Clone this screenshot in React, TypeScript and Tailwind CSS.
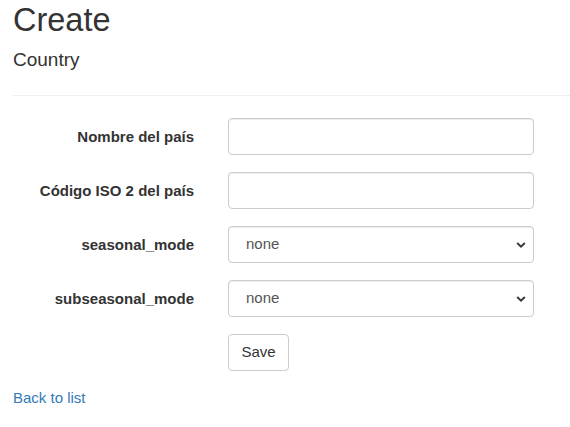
import React from "react";

function Chevron() {
  return (
    <svg
      className="pointer-events-none absolute right-[8px] top-1/2 -translate-y-1/2"
      width="10"
      height="7"
      viewBox="0 0 10 7"
      fill="none"
    >
      <path d="M1.2 1.5 L5 5.2 L8.8 1.5" stroke="#3a3a3a" strokeWidth="2" />
    </svg>
  );
}

function TextRow({ label }: { label: string }) {
  return (
    <div className="flex items-center">
      <label className="w-[181px] shrink-0 text-right text-[15px] font-bold leading-[20px] text-[#333]">
        {label}
      </label>
      <input
        type="text"
        className="ml-[34px] h-[37px] w-[306px] rounded-[4px] border border-[#ccc] bg-white px-[13px] text-[15px] text-[#555] shadow-[inset_0_1px_1px_rgba(0,0,0,0.075)] outline-none"
      />
    </div>
  );
}

function SelectRow({ label }: { label: string }) {
  return (
    <div className="flex items-center">
      <label className="w-[181px] shrink-0 text-right text-[15px] font-bold leading-[20px] text-[#333]">
        {label}
      </label>
      <div className="relative ml-[34px] h-[37px] w-[306px]">
        <select
          className="h-full w-full appearance-none rounded-[4px] border border-[#ccc] bg-white pl-[17px] pr-[24px] text-[15px] text-[#555] shadow-[inset_0_1px_1px_rgba(0,0,0,0.075)] outline-none"
          defaultValue="none"
        >
          <option value="none">none</option>
        </select>
        <Chevron />
      </div>
    </div>
  );
}

export default function App() {
  return (
    <div className="min-h-[427px] w-[570px] bg-white font-['Liberation_Sans',Arial,sans-serif] text-[#333]">
      <div className="pl-[13px]">
        <h2 className="pt-[3px] text-[32.5px] font-normal leading-[35px]">Create</h2>
        <h4 className="mt-[11px] text-[19px] font-normal leading-[21px]">Country</h4>
        <div className="mt-[25px] h-px bg-[#eee]" />
        <form className="mt-[22px] flex flex-col gap-[17px]" onSubmit={(e) => e.preventDefault()}>
          <TextRow label="Nombre del país" />
          <TextRow label="Código ISO 2 del país" />
          <SelectRow label="seasonal_mode" />
          <SelectRow label="subseasonal_mode" />
          <div className="flex">
            <button
              type="submit"
              className="ml-[215px] h-[37px] w-[61px] rounded-[4px] border border-[#ccc] bg-white text-[15px] text-[#333]"
            >
              Save
            </button>
          </div>
        </form>
        <div className="mt-[16px] text-[15px] leading-[21px]">
          <a href="#" className="text-[#337ab7]">
            Back to list
          </a>
        </div>
      </div>
    </div>
  );
}
